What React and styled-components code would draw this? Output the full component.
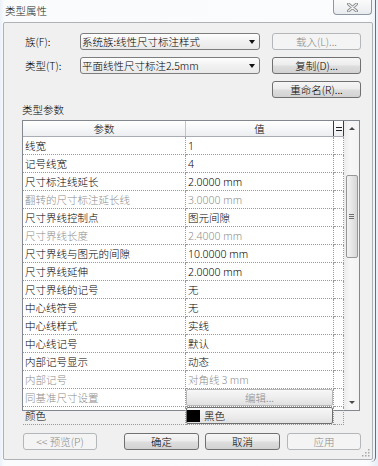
import React from 'react';
import styled, { createGlobalStyle } from 'styled-components';

const CJK = `"Noto Sans CJK SC", "Noto Sans", sans-serif`;
const UI = `"Noto Sans", "Noto Sans CJK SC", sans-serif`;

const Global = createGlobalStyle`
  html, body { margin: 0; padding: 0; background: #f8fafc; }
  body { font-family: ${CJK}; font-weight: 300; }
  * { box-sizing: border-box; }
`;

const Screen = styled.div`
  width: 378px;
  height: 466px;
  overflow: hidden;
  background: linear-gradient(90deg, #eaf1f8 0px, #f9fbfd 4px, #fafcfd 368px, #e6eef6 378px);
`;

const Frame = styled.div`
  width: 376px;
  height: 462px;
  display: flex;
  flex-direction: column;
  border-right: 1px solid #6e6e6e;
  border-bottom-right-radius: 5px;
`;

const TitleBar = styled.div`
  height: 22px;
  display: flex;
  justify-content: space-between;
  align-items: flex-start;
`;

const Title = styled.div`
  padding-left: 5px;
  line-height: 22px;
  font-size: 10.5px;
  color: #1c1c1c;
`;

const CloseButton = styled.div`
  width: 39px;
  height: 15px;
  margin-right: 3px;
  border: 1px solid #8e98a4;
  border-top: none;
  border-radius: 0 0 4px 4px;
  background: linear-gradient(#fbfbfb, #e9ecef);
  display: flex;
  align-items: center;
  justify-content: center;
`;

const Client = styled.div`
  position: relative;
  flex: 1;
  margin: 0 2px 2px 3px;
  border: 1px solid #aeb2b6;
  border-radius: 2px;
  background: #f0f0f0;
  display: flex;
  flex-direction: column;
`;

const Form = styled.div`
  display: grid;
  grid-template-columns: 43px 180px 89px;
  grid-template-rows: 17px 17px 17px;
  column-gap: 12px;
  row-gap: 7px;
  padding: 10px 0 0 21px;
  font-family: ${CJK};
  font-size: 10.5px;
`;

const Label = styled.div`
  display: flex;
  align-items: center;
  color: #000;
  white-space: nowrap;
`;

const Combo = styled.div`
  display: flex;
  align-items: center;
  justify-content: space-between;
  padding: 0 4px 0 1px;
  border: 1px solid #7d7d7d;
  border-radius: 3px;
  background: linear-gradient(#fefefe, #f1f1f1 50%, #e9e9e9);
  white-space: nowrap;
  color: #000;
`;

const ComboArrow = styled.span`
  width: 0;
  height: 0;
  border-left: 3.5px solid transparent;
  border-right: 3.5px solid transparent;
  border-top: 4px solid #111;
  margin-top: 1px;
`;

const Button = styled.div`
  display: flex;
  align-items: center;
  justify-content: center;
  border: 1px solid ${p => (p.$disabled ? '#b3b7ba' : '#707070')};
  border-radius: 3px;
  background: ${p =>
    p.$disabled
      ? '#f4f4f4'
      : 'linear-gradient(#f6f6f6 0%, #ececec 48%, #dedede 52%, #d2d2d2 100%)'};
  color: ${p => (p.$disabled ? '#8a8a8a' : '#000')};
  font-family: ${CJK};
  font-size: 10.5px;
  white-space: nowrap;
`;

const SectionLabel = styled.div`
  margin: 5px 0 3px 18px;
  line-height: 14px;
  font-size: 10.5px;
  color: #000;
`;

const Table = styled.div`
  margin-left: 18px;
  width: 338px;
  height: 291px;
  border: 1px solid #828790;
  background: #fff;
  display: flex;
`;

const Grid = styled.div`
  width: 321px;
  display: flex;
  flex-direction: column;
`;

const Header = styled.div`
  height: 20px;
  display: grid;
  grid-template-columns: 163px 148px 10px;
  border-bottom: 1px solid #a9adb3;
`;

const HeaderCell = styled.div`
  display: flex;
  align-items: center;
  justify-content: center;
  background: linear-gradient(#ffffff, #f4f5f6 60%, #eceef0);
  border-right: 1px solid ${p => (p.$dark ? '#3a3a3a' : '#c2c5c9')};
  font-family: ${CJK};
  font-size: 10.5px;
  color: #000;
`;

const EqGlyph = styled.span`
  width: 6px;
  height: 4px;
  border-top: 1.5px solid #222;
  border-bottom: 1.5px solid #222;
`;

const Body = styled.div`
  flex: 1;
  display: grid;
  grid-template-columns: 163px 148px 10px;
  grid-auto-rows: 1fr;
`;

const Cell = styled.div`
  display: flex;
  align-items: center;
  padding-left: ${p => (p.$fill ? 0 : '2px')};
  border-right: 1px dotted #9a9a9a;
  border-bottom: 1px dotted #9a9a9a;
  overflow: hidden;
  white-space: nowrap;
  font-family: ${p => (p.$latin ? UI : CJK)};
  font-size: 10.5px;
  color: ${p => (p.$dim ? '#8d8d8d' : '#000')};
`;

const CellButton = styled.div`
  width: 100%;
  height: 100%;
  display: flex;
  align-items: center;
  justify-content: ${p => (p.$left ? 'flex-start' : 'center')};
  gap: 4px;
  border: 1px solid ${p => (p.$strong ? '#6f6f6f' : '#b7b7b7')};
  border-radius: 2px;
  background: linear-gradient(#f7f7f7, #ededed 50%, #e1e1e1);
  color: ${p => (p.$strong ? '#000' : '#8d8d8d')};
  font-family: ${CJK};
  font-size: 10.5px;
`;

const Swatch = styled.span`
  width: 13px;
  height: 12px;
  background: #000;
`;

const Scrollbar = styled.div`
  width: 15px;
  display: flex;
  flex-direction: column;
  align-items: center;
  background: linear-gradient(90deg, #ececec, #f7f7f7 40%, #f3f3f3);
`;

const ArrowBox = styled.div`
  height: 15px;
  width: 100%;
  display: flex;
  align-items: center;
  justify-content: center;
`;

const Arrow = styled.span`
  width: 0;
  height: 0;
  border-left: 3px solid transparent;
  border-right: 3px solid transparent;
  ${p => (p.$down ? 'border-top: 3px solid #4a4a4a;' : 'border-bottom: 3px solid #4a4a4a;')}
`;

const Track = styled.div`
  flex: 1;
  width: 100%;
  display: flex;
  justify-content: center;
  padding-top: 39px;
`;

const Thumb = styled.div`
  width: 12px;
  height: 83px;
  border: 1px solid #979797;
  border-radius: 2px;
  background: linear-gradient(90deg, #f4f4f4, #e6e6e6 50%, #d6d6d6);
  display: flex;
  flex-direction: column;
  align-items: center;
  justify-content: center;
  gap: 1px;
`;

const Grip = styled.span`
  width: 5px;
  height: 1px;
  background: #6e6e6e;
`;

const ButtonRow = styled.div`
  display: flex;
  margin-top: 22px;
  padding-left: 19px;
  height: 17px;
`;

const DialogButton = styled(Button)`
  width: ${p => p.$w}px;
  margin-left: ${p => p.$gap || 0}px;
`;

const ResizeGrip = styled.svg`
  position: absolute;
  right: 2px;
  bottom: 2px;
`;

const rows = [
  ['线宽', '1'],
  ['记号线宽', '4'],
  ['尺寸标注线延长', '2.0000 mm'],
  ['翻转的尺寸标注延长线', '3.0000 mm', true],
  ['尺寸界线控制点', '图元间隙'],
  ['尺寸界线长度', '2.4000 mm', true],
  ['尺寸界线与图元的间隙', '10.0000 mm'],
  ['尺寸界线延伸', '2.0000 mm'],
  ['尺寸界线的记号', '无'],
  ['中心线符号', '无'],
  ['中心线样式', '实线'],
  ['中心线记号', '默认'],
  ['内部记号显示', '动态'],
  ['内部记号', '对角线 3 mm', true],
  ['同基准尺寸设置', 'edit', true],
  ['颜色', 'color'],
];

function ValueCell({ value, dim }) {
  if (value === 'edit') {
    return (
      <Cell $fill>
        <CellButton>编辑...</CellButton>
      </Cell>
    );
  }
  if (value === 'color') {
    return (
      <Cell $fill>
        <CellButton $strong $left>
          <Swatch />
          黑色
        </CellButton>
      </Cell>
    );
  }
  return (
    <Cell $dim={dim} $latin={/^[0-9]/.test(value)}>
      {value}
    </Cell>
  );
}

export default function App() {
  return (
    <>
      <Global />
      <Screen>
        <Frame>
          <TitleBar>
            <Title>类型属性</Title>
            <CloseButton>
              <svg width="11" height="9" viewBox="0 0 11 9">
                <path d="M1.5 1 L9.5 8 M9.5 1 L1.5 8" stroke="#8d8d8d" strokeWidth="3" strokeLinecap="round" />
                <path d="M1.5 1 L9.5 8 M9.5 1 L1.5 8" stroke="#f3f3f3" strokeWidth="1.1" strokeLinecap="round" />
              </svg>
            </CloseButton>
          </TitleBar>
          <Client>
            <Form>
              <Label>族(F):</Label>
              <Combo>
                <span>系统族:线性尺寸标注样式</span>
                <ComboArrow />
              </Combo>
              <Button $disabled>载入(L)...</Button>
              <Label>类型(T):</Label>
              <Combo>
                <span>平面线性尺寸标注2.5mm</span>
                <ComboArrow />
              </Combo>
              <Button>复制(D)...</Button>
              <span />
              <span />
              <Button>重命名(R)...</Button>
            </Form>
            <SectionLabel>类型参数</SectionLabel>
            <Table>
              <Grid>
                <Header>
                  <HeaderCell>参数</HeaderCell>
                  <HeaderCell $dark>值</HeaderCell>
                  <HeaderCell $dark>
                    <EqGlyph />
                  </HeaderCell>
                </Header>
                <Body>
                  {rows.map(([name, value, dim]) => (
                    <React.Fragment key={name}>
                      <Cell $dim={dim}>{name}</Cell>
                      <ValueCell value={value} dim={dim} />
                      <Cell />
                    </React.Fragment>
                  ))}
                </Body>
              </Grid>
              <Scrollbar>
                <ArrowBox>
                  <Arrow />
                </ArrowBox>
                <Track>
                  <Thumb>
                    <Grip />
                    <Grip />
                    <Grip />
                  </Thumb>
                </Track>
                <ArrowBox>
                  <Arrow $down />
                </ArrowBox>
              </Scrollbar>
            </Table>
            <ButtonRow>
              <DialogButton $w={74} $disabled>&lt;&lt; 预览(P)</DialogButton>
              <DialogButton $w={75} $gap={27}>确定</DialogButton>
              <DialogButton $w={75} $gap={6}>取消</DialogButton>
              <DialogButton $w={74} $gap={7} $disabled>应用</DialogButton>
            </ButtonRow>
            <ResizeGrip width="8" height="8" viewBox="0 0 8 8">
              <rect x="6" y="0" width="1.5" height="1.5" fill="#a8a8a8" />
              <rect x="3" y="3" width="1.5" height="1.5" fill="#a8a8a8" />
              <rect x="6" y="3" width="1.5" height="1.5" fill="#a8a8a8" />
              <rect x="0" y="6" width="1.5" height="1.5" fill="#a8a8a8" />
              <rect x="3" y="6" width="1.5" height="1.5" fill="#a8a8a8" />
              <rect x="6" y="6" width="1.5" height="1.5" fill="#a8a8a8" />
            </ResizeGrip>
          </Client>
        </Frame>
      </Screen>
    </>
  );
}
